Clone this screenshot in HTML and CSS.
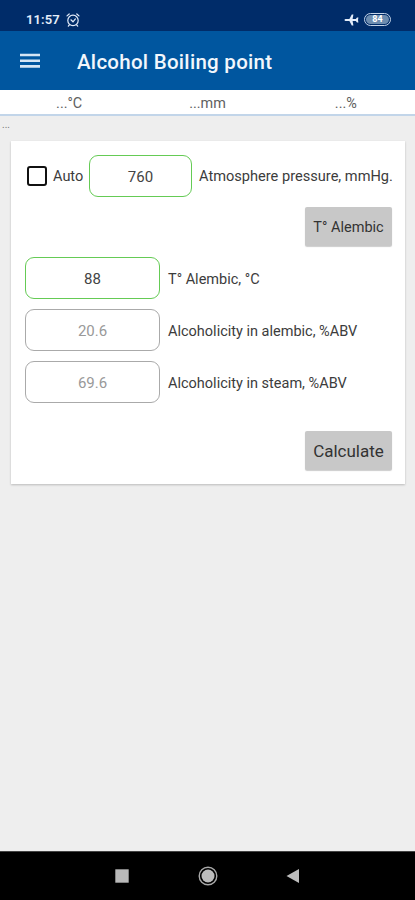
FILE: index.html
```html
<!DOCTYPE html>
<html lang="en">
<head>
<meta charset="utf-8">
<title>Alcohol Boiling point</title>
<link rel="stylesheet" href="styles.css">
</head>
<body>
<div class="status">
  <span class="clock">11:57</span>
  <svg class="alarm" width="14" height="14" viewBox="0 0 14 14" fill="none" stroke="currentColor" stroke-width="1.2" stroke-linecap="round"><circle cx="7" cy="7.4" r="5.2"/><path d="M1 2.9 3.2 1M13 2.9 10.8 1M4.9 6.8 7 8.8l2.4-2.9M3.3 12l-1 1.1M10.7 12l1 1.1"/></svg>
  <svg class="plane" width="15" height="12" viewBox="0 0 15 12" fill="currentColor"><path d="M.5 6Q.5 5 1.7 5H5.4L7.8.5H9.4L8.6 5H11.8L13 3.4H14.4L14 6 14.4 8.6H13L11.8 7H8.6L9.4 11.5H7.8L5.4 7H1.7Q.5 7 .5 6Z"/></svg>
  <span class="battery"><span class="level">84</span></span>
</div>
<header class="bar">
  <svg class="menu" width="20" height="16" viewBox="0 0 20 16" fill="currentColor"><path d="M0 .7h20v2.6H0zM0 6.4h20V9H0zM0 12.1h20v2.6H0z"/></svg>
  <h1 class="title">Alcohol Boiling point</h1>
</header>
<div class="readings"><span>...°C</span><span>...mm</span><span>...%</span></div>
<main class="content">
  <div class="note">...</div>
  <section class="card">
    <div class="row pressure">
      <span class="check"></span>
      <span class="label auto">Auto</span>
      <div class="field active">760</div>
      <span class="label atm">Atmosphere pressure, mmHg.</span>
    </div>
    <div class="action"><button class="btn small">T° Alembic</button></div>
    <div class="row"><div class="field active">88</div><span class="label">T° Alembic, °C</span></div>
    <div class="row"><div class="field">20.6</div><span class="label">Alcoholicity in alembic, %ABV</span></div>
    <div class="row"><div class="field">69.6</div><span class="label">Alcoholicity in steam, %ABV</span></div>
    <div class="action last"><button class="btn">Calculate</button></div>
  </section>
</main>
<nav class="nav">
  <svg width="14" height="14" viewBox="0 0 14 14"><path fill="#b9b9b9" d="M.3.3h13.4v13.4H.3z"/></svg>
  <svg width="20" height="20" viewBox="0 0 20 20"><circle cx="10" cy="10" r="8.8" fill="none" stroke="#a9a9a9" stroke-width="1.4"/><circle cx="10" cy="10" r="6.5" fill="#bdbdbd"/></svg>
  <svg width="14" height="14" viewBox="0 0 14 14"><path fill="#bdbdbd" d="M.5 7 13 0v14z"/></svg>
</nav>
</body>
</html>
```

FILE: styles.css
```css
* { box-sizing: border-box; }
body {
  margin: 0;
  height: 900px;
  display: flex;
  flex-direction: column;
  overflow: hidden;
  background: #eee;
  color: #3c3c3c;
  font-family: Roboto, "Liberation Sans", sans-serif;
}
.status {
  height: 31px;
  padding: 8px 24px 0 26px;
  display: flex;
  align-items: center;
  background: #002c69;
  color: #e4edfa;
}
.clock { font-size: 13px; font-weight: 600; letter-spacing: 0.1px; }
.alarm { margin-left: 6px; }
.plane { margin-left: auto; margin-right: 5px; }
.battery {
  width: 27px;
  height: 13px;
  padding: 1px;
  border: 1px solid #c3d3e8;
  border-radius: 7px;
}
.level {
  display: block;
  height: 9px;
  border-radius: 5px;
  background: #6c8caf;
  color: #fff;
  font-size: 9px;
  font-weight: 700;
  line-height: 9px;
  text-align: center;
}
.bar {
  height: 59px;
  padding: 1px 20px 0;
  display: flex;
  align-items: center;
  background: #00569f;
  color: #f2f7fc;
}
.menu { color: #d5e5f4; }
.title { margin: 2px 0 0 37px; font-size: 20.5px; font-weight: 500; letter-spacing: 0.28px; white-space: nowrap; }
.readings {
  height: 26px;
  padding-top: 2px;
  display: grid;
  grid-template-columns: repeat(3, 1fr);
  align-items: center;
  text-align: center;
  background: #fff;
  border-bottom: 2px solid #c2d5e9;
  color: #606060;
  font-size: 14.4px;
}
.content { flex: 1; }
.note { height: 25px; padding: 2px 0 0 2px; font-size: 10px; line-height: 14px; color: #777; }
.card {
  width: 394px;
  height: 343px;
  margin-left: 11px;
  padding: 14px 13px 0 14px;
  background: #fff;
  box-shadow: 0 1px 2px #bbb;
}
.row { display: flex; align-items: center; height: 42px; margin-bottom: 10px; }
.field {
  flex: none;
  width: 135px;
  height: 42px;
  padding-top: 1px;
  border: 1px solid #aaa;
  border-radius: 9px;
  display: flex;
  align-items: center;
  justify-content: center;
  font-size: 15px;
  color: #999;
}
.field.active { border-color: #65cb55; color: #444; }
.label { margin: 2px 0 0 8px; font-size: 14.5px; white-space: nowrap; }
.pressure .field { width: 103px; margin-left: 5px; }
.check { flex: none; width: 20px; height: 20px; margin-left: 2px; border: 2px solid #111; border-radius: 3px; }
.label.auto { flex: none; margin: 1px 0 0 6px; width: 31px; }
.label.atm { margin: 0 0 0 7px; font-size: 14.6px; }
.action { display: flex; justify-content: flex-end; margin-bottom: 11px; }
.last { margin-top: 28px; }
.btn {
  width: 87px;
  height: 39px;
  padding: 1px 0 0;
  border: 0;
  border-radius: 2px;
  background: #c8c8c8;
  box-shadow: 0 1px 1px #ccc;
  color: #333;
  font-family: inherit;
  font-size: 17px;
}
.btn.small { padding-top: 2px; font-size: 14.5px; }
.nav {
  height: 49px;
  padding: 0 115px;
  display: flex;
  align-items: center;
  justify-content: space-between;
  background: #000;
  border-top: 1px solid #444;
}
```
